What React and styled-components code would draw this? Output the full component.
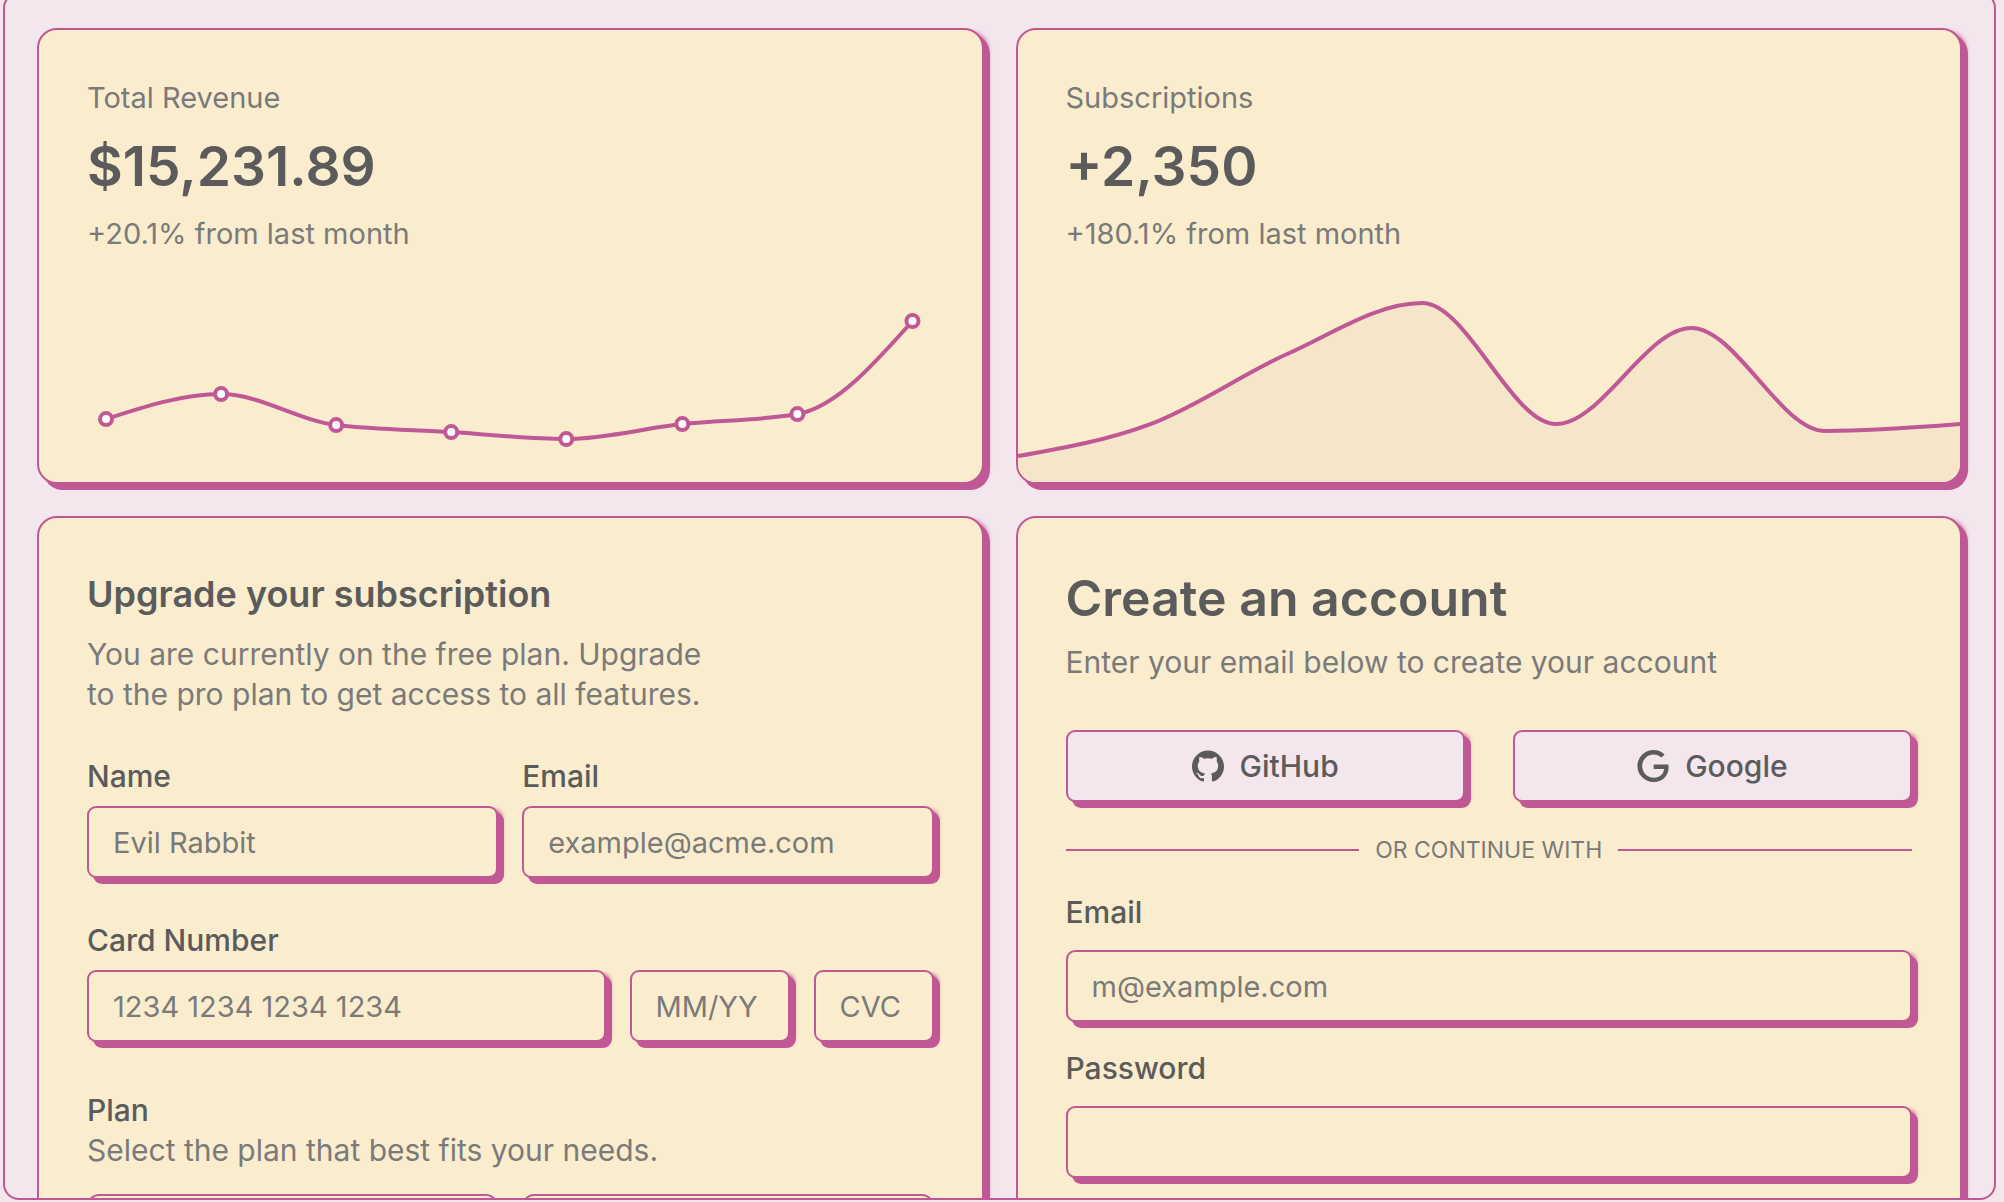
import React from "react";
import styled, { createGlobalStyle } from "styled-components";
import { SiGithub, SiGoogle } from "react-icons/si";

const color = {
  background: "#f3e6ed",
  card: "#faedcd",
  area: "#f5e6ca",
  foreground: "#5b5b5b",
  muted: "#7a7a7a",
  border: "#c15896",
};

const shadow = `6px 6px 0 0 ${color.border}, 6px 2px 4px -2px ${color.border}`;

const GlobalStyle = createGlobalStyle`
  *, *::before, *::after { box-sizing: border-box; }
  html, body, #root { height: 100%; }
  body {
    margin: 0;
    overflow: hidden;
    background: ${color.background};
    color: ${color.foreground};
    font-family: Inter, "Open Sans", sans-serif;
    font-size: 30px;
    line-height: 40px;
  }
  h1, h2, p { margin: 0; }
`;

const Page = styled.div`
  display: flex;
  height: 100%;
  padding: 0 8px 2px 3px;
`;

const Frame = styled.main`
  flex: 1;
  margin-top: -8px;
  padding: 34px 32px 0;
  overflow: hidden;
  border: 2px solid ${color.border};
  border-radius: 16px;
`;

const Grid = styled.div`
  display: grid;
  grid-template-columns: repeat(2, minmax(0, 1fr));
  gap: 32px;
`;

const Card = styled.section`
  display: flex;
  flex-direction: column;
  padding: 48px;
  border: 2px solid ${color.border};
  border-radius: 20px;
  background: ${color.card};
  box-shadow: ${shadow};
`;

const Header = styled.header`
  display: flex;
  flex-direction: column;
  gap: 12px;
`;

const Stat = styled.p`
  font-size: 55px;
  font-weight: 600;
  line-height: 72px;
`;

const Caption = styled.p`
  color: ${color.muted};
  font-size: 29px;
`;

const Description = styled.p`
  color: ${color.muted};
  max-width: ${(p) => (p.$narrow ? "640px" : "none")};
`;

const Title = styled.h2`
  font-size: ${(p) => (p.$large ? "50px" : "36px")};
  line-height: ${(p) => (p.$large ? "64px" : "56px")};
  font-weight: 600;
`;

const Chart = styled.svg`
  display: block;
  width: 100%;
  height: auto;
  overflow: visible;
`;

const Bleed = styled.div`
  margin: 28px -48px -48px;
  overflow: hidden;
  border-radius: 0 0 18px 18px;
`;

const Inset = styled.div`
  margin-top: 28px;
`;

const Form = styled.form`
  display: flex;
  flex-direction: column;
  gap: ${(p) => p.$gap};
  margin-top: 48px;
`;

const Columns = styled.div`
  display: grid;
  grid-template-columns: ${(p) => p.$template || "1fr 1fr"};
  gap: ${(p) => p.$gap || "24px"};
  align-items: end;
`;

const Field = styled.div`
  display: flex;
  flex-direction: column;
  gap: ${(p) => p.$gap || "16px"};
  min-width: 0;
`;

const Label = styled.label`
  line-height: 28px;
  font-weight: 500;
`;

const Input = styled.input`
  width: 100%;
  min-width: 0;
  height: 72px;
  padding: 0 24px;
  border: 2px solid ${color.border};
  border-radius: 9px;
  background: ${color.card};
  box-shadow: ${shadow};
  color: ${color.foreground};
  font: inherit;
  font-size: 29px;
  outline: none;
  &::placeholder { color: ${color.muted}; opacity: 1; }
`;

const PlanGroup = styled.fieldset`
  margin: 0;
  padding: 0;
  border: 0;
`;

const Legend = styled.legend`
  padding: 0;
  font-weight: 500;
`;

const PlanOptions = styled.div`
  display: grid;
  grid-template-columns: 1fr 1fr;
  gap: 24px;
  margin-top: 24px;
`;

const PlanOption = styled.label`
  display: flex;
  gap: 24px;
  padding: 24px;
  border: 2px solid ${color.border};
  border-radius: 12px;
`;

const Button = styled.button`
  display: flex;
  align-items: center;
  justify-content: center;
  gap: 16px;
  height: 72px;
  border: 2px solid ${color.border};
  border-radius: 9px;
  background: ${color.background};
  box-shadow: ${shadow};
  color: ${color.foreground};
  font: inherit;
  font-weight: 500;
  svg { width: 32px; height: 32px; }
`;

const Divider = styled.div`
  display: flex;
  align-items: center;
  gap: 16px;
  color: ${color.muted};
  font-size: 23px;
  line-height: 32px;
  text-transform: uppercase;
  &::before, &::after {
    content: "";
    flex: 1;
    height: 2px;
    background: ${color.border};
  }
`;

const revenue = [
  [19, 137], [134, 112], [249, 143], [364, 150],
  [479, 157], [595, 142], [710, 132], [825, 39],
];

const subscriptions = [
  [0, 174], [135, 141], [269, 72], [404, 21],
  [538, 142], [673, 46], [807, 149], [942, 142],
];

// Monotone cubic interpolation through the points, as an SVG path.
function monotonePath(points) {
  const n = points.length;
  const slope = (i) =>
    (points[i + 1][1] - points[i][1]) / (points[i + 1][0] - points[i][0]);
  const tangents = points.map((_, i) => {
    if (i === 0 || i === n - 1) return 0;
    const h0 = points[i][0] - points[i - 1][0];
    const h1 = points[i + 1][0] - points[i][0];
    const s0 = slope(i - 1);
    const s1 = slope(i);
    const p = (s0 * h1 + s1 * h0) / (h0 + h1);
    return (
      (Math.sign(s0) + Math.sign(s1)) *
      Math.min(Math.abs(s0), Math.abs(s1), 0.5 * Math.abs(p))
    );
  });
  tangents[0] = (3 * slope(0) - tangents[1]) / 2;
  tangents[n - 1] = (3 * slope(n - 2) - tangents[n - 2]) / 2;
  let d = `M${points[0][0]},${points[0][1]}`;
  for (let i = 1; i < n; i++) {
    const [x0, y0] = points[i - 1];
    const [x1, y1] = points[i];
    const dx = (x1 - x0) / 3;
    d += `C${x0 + dx},${y0 + dx * tangents[i - 1]},${x1 - dx},${y1 - dx * tangents[i]},${x1},${y1}`;
  }
  return d;
}

function RevenueChart() {
  return (
    <Inset>
      <Chart viewBox="0 0 846 152" role="img" aria-label="Revenue by month">
        <path d={monotonePath(revenue)} fill="none" stroke={color.border} strokeWidth="4" />
        {revenue.map(([x, y]) => (
          <circle key={x} cx={x} cy={y} r="6" fill="#fff" stroke={color.border} strokeWidth="4" />
        ))}
      </Chart>
    </Inset>
  );
}

function SubscriptionsChart() {
  const line = monotonePath(subscriptions);
  return (
    <Bleed>
      <Chart viewBox="0 0 942 200" role="img" aria-label="Subscriptions by month">
        <path d={`${line}V200H0Z`} fill={color.area} />
        <path d={line} fill="none" stroke={color.border} strokeWidth="4" />
      </Chart>
    </Bleed>
  );
}

export default function App() {
  return (
    <>
      <GlobalStyle />
      <Page>
        <Frame>
          <Grid>
            <Card>
              <Header>
                <Caption>Total Revenue</Caption>
                <Stat>$15,231.89</Stat>
                <Caption>+20.1% from last month</Caption>
              </Header>
              <RevenueChart />
            </Card>

            <Card>
              <Header>
                <Caption>Subscriptions</Caption>
                <Stat>+2,350</Stat>
                <Caption>+180.1% from last month</Caption>
              </Header>
              <SubscriptionsChart />
            </Card>

            <Card>
              <Header>
                <Title>Upgrade your subscription</Title>
                <Description $narrow>
                  You are currently on the free plan. Upgrade to the pro plan to get access to all features.
                </Description>
              </Header>
              <Form $gap="48px">
                <Columns>
                  <Field>
                    <Label htmlFor="name">Name</Label>
                    <Input id="name" placeholder="Evil Rabbit" />
                  </Field>
                  <Field>
                    <Label htmlFor="billing-email">Email</Label>
                    <Input id="billing-email" type="email" placeholder="example@acme.com" />
                  </Field>
                </Columns>
                <Columns $template="minmax(0, 1fr) 160px 120px">
                  <Field>
                    <Label htmlFor="card-number">Card Number</Label>
                    <Input id="card-number" placeholder="1234 1234 1234 1234" />
                  </Field>
                  <Input aria-label="Expiry date" placeholder="MM/YY" />
                  <Input aria-label="Security code" placeholder="CVC" />
                </Columns>
                <PlanGroup>
                  <Legend>Plan</Legend>
                  <Description>Select the plan that best fits your needs.</Description>
                  <PlanOptions>
                    <PlanOption>
                      <input type="radio" name="plan" aria-label="Starter" />
                    </PlanOption>
                    <PlanOption>
                      <input type="radio" name="plan" aria-label="Pro" />
                    </PlanOption>
                  </PlanOptions>
                </PlanGroup>
              </Form>
            </Card>

            <Card>
              <Header>
                <Title $large>Create an account</Title>
                <Description>Enter your email below to create your account</Description>
              </Header>
              <Form $gap="32px">
                <Columns $gap="48px">
                  <Button type="button">
                    <SiGithub aria-hidden="true" />
                    GitHub
                  </Button>
                  <Button type="button">
                    <SiGoogle aria-hidden="true" />
                    Google
                  </Button>
                </Columns>
                <Divider>Or continue with</Divider>
                <Field $gap="24px">
                  <Label htmlFor="email">Email</Label>
                  <Input id="email" type="email" placeholder="m@example.com" />
                </Field>
                <Field $gap="24px">
                  <Label htmlFor="password">Password</Label>
                  <Input id="password" type="password" />
                </Field>
              </Form>
            </Card>
          </Grid>
        </Frame>
      </Page>
    </>
  );
}
